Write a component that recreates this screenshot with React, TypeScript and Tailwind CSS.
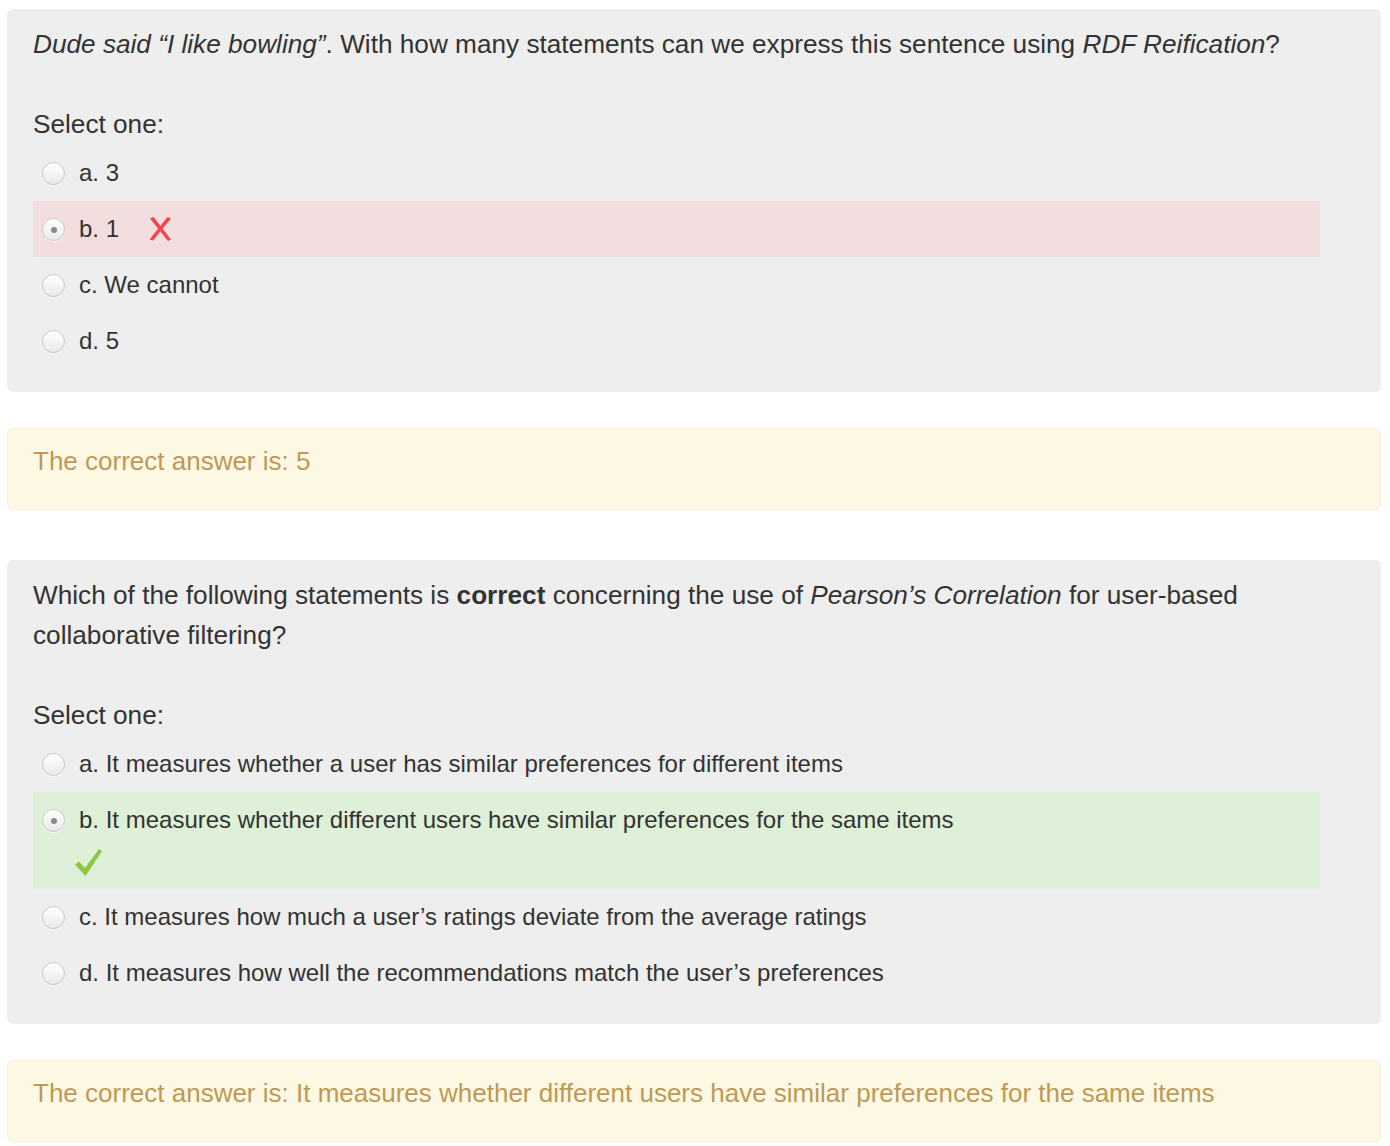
import React from "react";

const font = { fontFamily: '"Liberation Sans", Arial, Helvetica, sans-serif' };

function Radio({ checked }: { checked?: boolean }) {
  return (
    <span className="ml-[9px] mr-[14px] mt-[9px] flex h-[23px] w-[23px] shrink-0 items-center justify-center rounded-full border border-[#c8c8c8] bg-gradient-to-b from-[#ffffff] to-[#e9e9e9] shadow-[0_1px_0_rgba(255,255,255,0.6)]">
      {checked && <span className="h-[6px] w-[6px] rounded-full bg-[#8a8a8a]" />}
    </span>
  );
}

function Cross() {
  return (
    <svg width="26" height="26" viewBox="0 0 26 26" className="ml-[28px] mt-[7px]">
      <path d="M3 2.5 L6.5 1 L24 23.5 L21 25 Z" fill="#f4454a" />
      <path d="M20.5 1 L24 2.5 L6 24.5 L2.5 23.5 Z" fill="#f4454a" />
    </svg>
  );
}

function Check() {
  return (
    <svg width="27" height="27" viewBox="0 0 27 27">
      <path d="M0 15.5 L4 12.5 L10 19 L24 0 L27 2 L10.5 27 Z" fill="#8dc63f" />
    </svg>
  );
}

type Opt = { label: string; state?: "wrong" | "right" };

function Option({ label, state }: Opt) {
  const bg =
    state === "wrong" ? "bg-[#f2dede]" : state === "right" ? "bg-[#dff0d8]" : "";
  return (
    <div className={`flex py-[8px] ${bg}`}>
      <Radio checked={!!state} />
      <div className="flex flex-col">
        <div className="flex items-start">
          <span className="leading-[40px]">{label}</span>
          {state === "wrong" && <Cross />}
        </div>
        {state === "right" && (
          <div className="flex h-[41px] items-center">
            <span className="-ml-[4px] mt-[3px]">
              <Check />
            </span>
          </div>
        )}
      </div>
    </div>
  );
}

function Panel({ question, options }: { question: React.ReactNode; options: Opt[] }) {
  return (
    <div className="rounded-[6px] bg-[#eeeeee] pb-[23px] pl-[26px] pr-[61px] pt-[15px] text-[24px]">
      <div className="text-[26.2px] leading-[40px]">{question}</div>
      <div className="mt-[40px] text-[26.2px] leading-[40px]">Select one:</div>
      <div className="mt-px">
        {options.map((o, i) => (
          <Option key={i} {...o} />
        ))}
      </div>
    </div>
  );
}

function Feedback({ children }: { children: React.ReactNode }) {
  return (
    <div className="rounded-[6px] border border-[#fbeed5] bg-[#fcf8e3] pb-[28px] pl-[25px] pt-[12px] text-[26px] leading-[40px] text-[#c09853]">
      {children}
    </div>
  );
}

export default function App() {
  return (
    <div className="min-h-[1146px] bg-white pl-[7px] pr-[9px] pt-[9px] text-[#333333]" style={font}>
      <Panel
        question={
          <>
            <i>Dude said “I like bowling”</i>. With how many statements can we express this sentence using{" "}
            <i>RDF Reification</i>?
          </>
        }
        options={[
          { label: "a. 3" },
          { label: "b. 1", state: "wrong" },
          { label: "c. We cannot" },
          { label: "d. 5" },
        ]}
      />
      <div className="mt-[36px]">
        <Feedback>The correct answer is: 5</Feedback>
      </div>
      <div className="mt-[50px]">
        <Panel
          question={
            <>
              Which of the following statements is <b>correct</b> concerning the use of{" "}
              <i>Pearson’s Correlation</i> for user-based
              <br />
              collaborative filtering?
            </>
          }
          options={[
            { label: "a. It measures whether a user has similar preferences for different items" },
            {
              label: "b. It measures whether different users have similar preferences for the same items",
              state: "right",
            },
            { label: "c. It measures how much a user’s ratings deviate from the average ratings" },
            { label: "d. It measures how well the recommendations match the user’s preferences" },
          ]}
        />
      </div>
      <div className="mt-[36px]">
        <Feedback>
          The correct answer is: It measures whether different users have similar preferences for the same items
        </Feedback>
      </div>
    </div>
  );
}
